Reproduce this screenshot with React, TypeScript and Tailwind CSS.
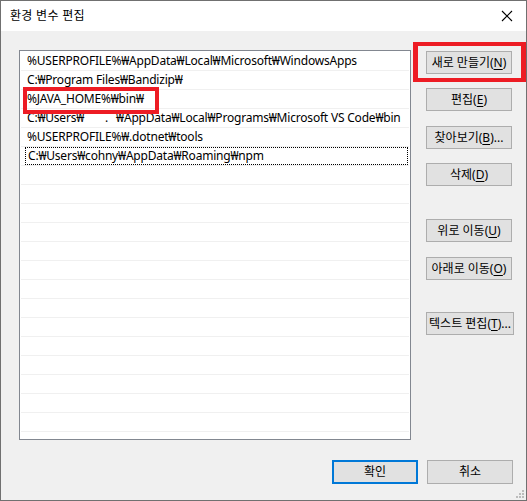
import React from "react";

const font = { fontFamily: '"Noto Sans", "Noto Sans CJK KR", sans-serif' };

function Btn({
  pre,
  k,
  post = ")",
  className = "",
}: {
  pre: string;
  k: string;
  post?: string;
  className?: string;
}) {
  return (
    <div
      className={`h-[23px] w-[86px] flex items-center justify-center bg-[#e1e1e1] border border-[#adadad] text-[12px] text-black whitespace-nowrap ${className}`}
    >
      {pre}
      <span className="underline underline-offset-2">{k}</span>
      {post}
    </div>
  );
}

export default function App() {
  const rows: React.ReactNode[] = [
    "%USERPROFILE%₩AppData₩Local₩Microsoft₩WindowsApps",
    "C:₩Program Files₩Bandizip₩",
    "%JAVA_HOME%₩bin₩",
    <>
      C:₩Users₩
      <span className="inline-block w-[21px]" />.
      <span className="inline-block w-[8px]" />
      ₩AppData₩Local₩Programs₩Microsoft VS Code₩bin
    </>,
    "%USERPROFILE%₩.dotnet₩tools",
    "C:₩Users₩cohny₩AppData₩Roaming₩npm",
  ];
  const all = [...rows, ...Array.from({ length: 16 }, () => "")];
  return (
    <div
      className="relative w-[527px] h-[501px] border border-[#707070] bg-[#f0f0f0] flex flex-col overflow-hidden"
      style={font}
    >
      {/* title bar */}
      <div className="h-[30px] bg-white flex items-center justify-between pl-[9px] pr-[13px] shrink-0">
        <span className="text-[12px] text-black tracking-[0.3px]">환경 변수 편집</span>
        <svg width="12" height="12" viewBox="0 0 12 12">
          <path d="M1 1 L11 11 M11 1 L1 11" stroke="#000" strokeWidth="1.1" />
        </svg>
      </div>

      <div className="flex pt-[19px] pl-[18px]">
        {/* list */}
        <div className="w-[392px] h-[390px] border border-[#828790] bg-white p-[1px] overflow-hidden">
          {all.map((r, i) => (
            <div key={i} className="h-[19px] border-b border-[#f0f0f0] flex">
              <div
                className={`ml-[4px] mr-[1px] flex-1 h-[18px] flex items-center pl-[2px] text-[12px] tracking-[-0.2px] text-black whitespace-nowrap overflow-hidden ${
                  i === 5 ? "border border-dotted border-black pl-[1px]" : ""
                }`}
              >
                <span className="whitespace-nowrap">{r}</span>
              </div>
            </div>
          ))}
        </div>

        {/* right buttons */}
        <div className="flex flex-col ml-[15px] pt-[1px]">
          <Btn pre="새로 만들기(" k="N" />
          <Btn pre="편집(" k="E" className="mt-[14px]" />
          <Btn pre="찾아보기(" k="B" post=")..." className="mt-[15px]" />
          <Btn pre="삭제(" k="D" className="mt-[14px]" />
          <Btn pre="위로 이동(" k="U" className="mt-[33px]" />
          <Btn pre="아래로 이동(" k="O" className="mt-[15px]" />
          <Btn pre="텍스트 편집(" k="T" post=")..." className="mt-[32px] w-[88px]" />
        </div>
      </div>

      {/* bottom buttons */}
      <div className="flex justify-end gap-[9px] pr-[13px] mt-[20px]">
        <div className="h-[24px] w-[86px] flex items-center justify-center bg-[#e1e1e1] border-2 border-[#0078d7] text-[12px] text-black">
          확인
        </div>
        <div className="h-[24px] w-[86px] flex items-center justify-center bg-[#e1e1e1] border border-[#adadad] text-[12px] text-black">
          취소
        </div>
      </div>

      {/* resize grip */}
      <svg className="absolute right-[2px] bottom-[2px]" width="8" height="8" viewBox="0 0 8 8">
        <rect x="6" y="0" width="2" height="2" fill="#bcbcbc" />
        <rect x="3" y="3" width="2" height="2" fill="#bcbcbc" />
        <rect x="6" y="3" width="2" height="2" fill="#bcbcbc" />
        <rect x="0" y="6" width="2" height="2" fill="#bcbcbc" />
        <rect x="3" y="6" width="2" height="2" fill="#bcbcbc" />
        <rect x="6" y="6" width="2" height="2" fill="#bcbcbc" />
      </svg>

      {/* red annotation boxes */}
      <div className="absolute left-[22px] top-[86px] w-[136px] h-[27px] border-[4px] border-[#ed1c24]" />
      <div className="absolute left-[412px] top-[41px] w-[113px] h-[40px] border-y-[4px] border-x-[5px] border-[#ed1c24]" />
    </div>
  );
}
